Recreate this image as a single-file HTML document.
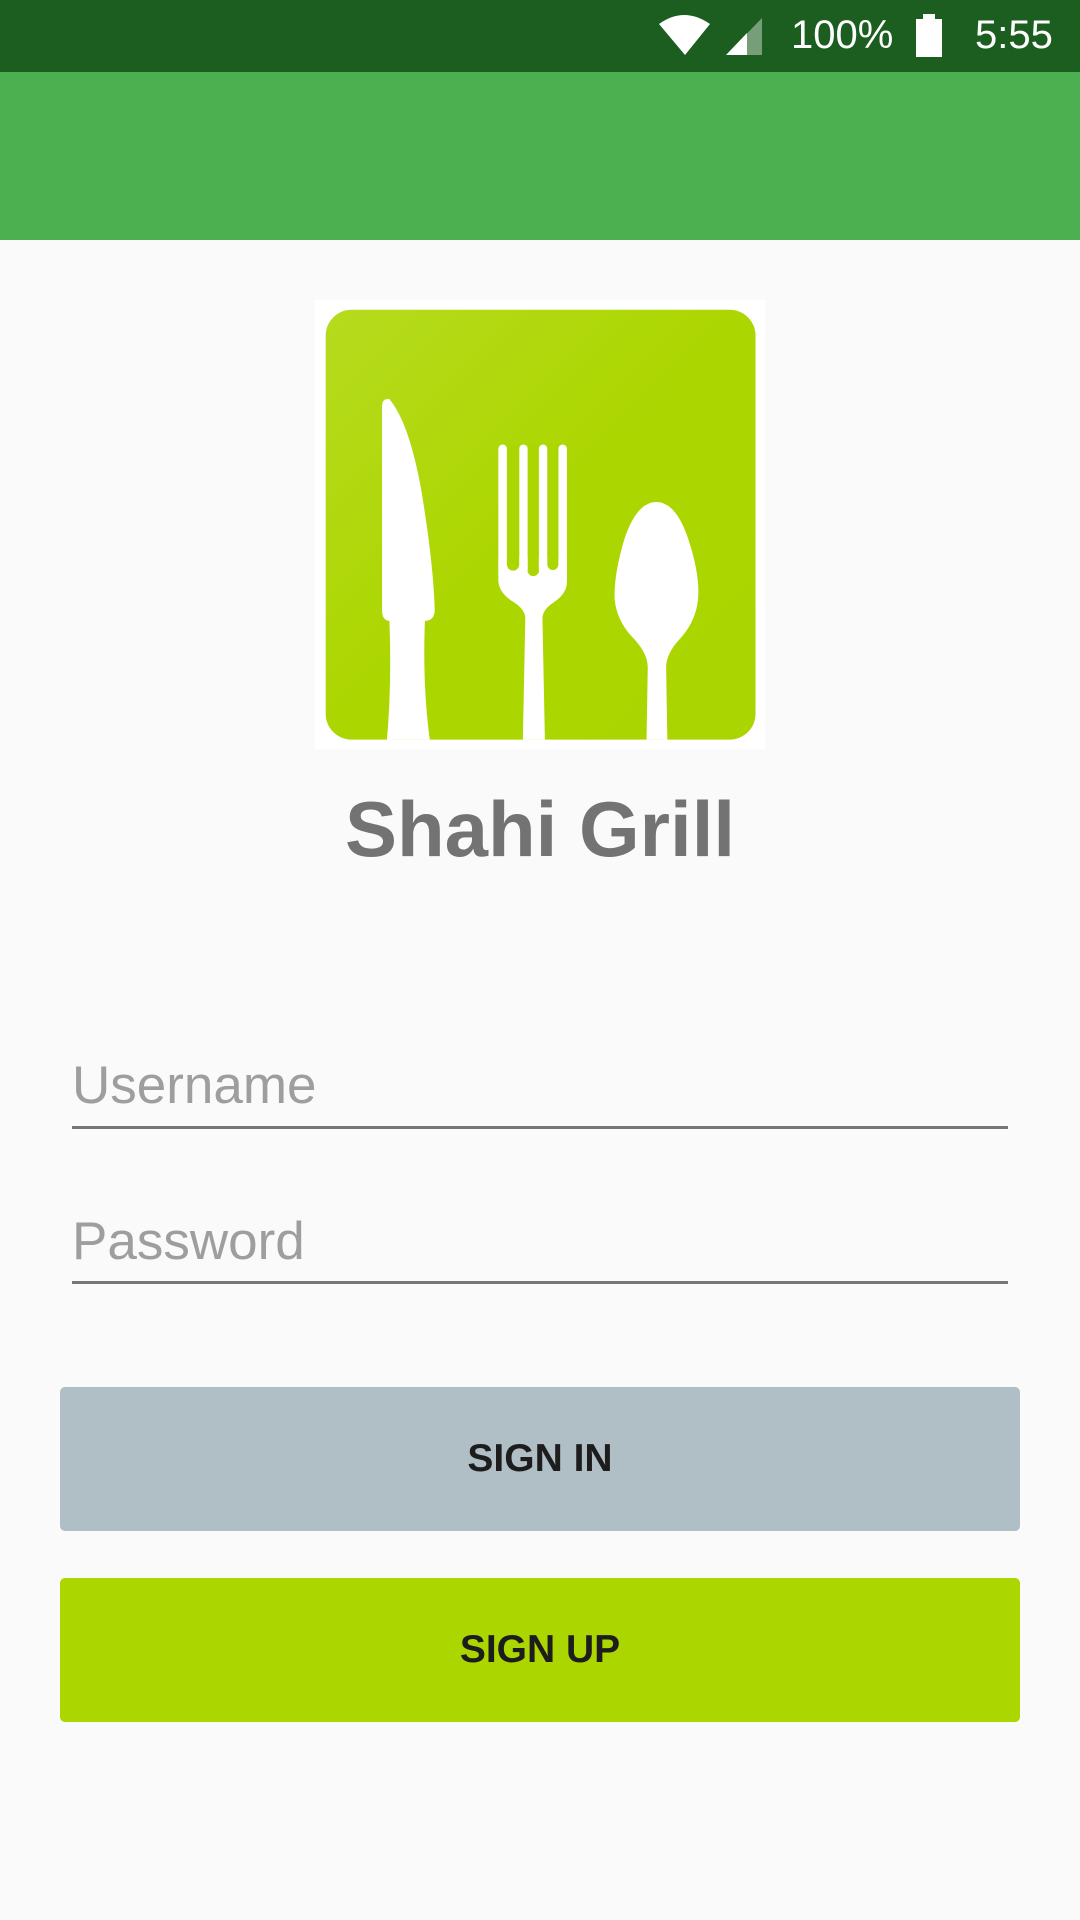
<!DOCTYPE html>
<html><head><meta charset="utf-8"><style>
body{margin:0;width:1080px;height:1920px;background:#fafafa;position:relative;overflow:hidden;font-family:"Liberation Sans",Roboto,sans-serif}
.sb{position:absolute;left:0;top:0;width:1080px;height:72px;background:#1b5e20}
.ab{position:absolute;left:0;top:72px;width:1080px;height:168px;background:#4caf50}
.t{position:absolute;color:#fff;font-size:40px;top:13px}
.title{position:absolute;left:0;width:1080px;text-align:center;top:784px;font-size:78px;font-weight:bold;color:#737373}
.hint{position:absolute;left:72px;font-size:53px;color:#9e9e9e}
.line{position:absolute;left:72px;width:936px;height:3px;background:#767676}
.btn{position:absolute;left:60px;width:960px;height:144px;border-radius:5px;text-align:center;line-height:144px;font-size:39px;font-weight:bold;color:#1d1d1d}
</style></head><body>
<div class="sb"></div>
<svg style="position:absolute;left:0;top:0" width="1080" height="72">
<path d="M659 24 Q684 6 710 24 L685 55 Z" fill="#fff"/>
<path d="M726 55 L762 18 L762 55 Z" fill="#fff" opacity="0.4"/>
<path d="M726 55 L747 33 L747 55 Z" fill="#fff"/>
<rect x="916" y="19" width="26" height="38" fill="#fff"/><rect x="923" y="14" width="12" height="6" fill="#fff"/>
</svg>
<div class="t" style="left:791px">100%</div>
<div class="t" style="left:975px">5:55</div>
<div class="ab"></div>
<svg style="position:absolute;left:0;top:0" width="1080" height="1920" viewBox="0 0 882 1568">
<defs><linearGradient id="g" x1="0" y1="0" x2="1" y2="1"><stop offset="0" stop-color="#b6db1e"/><stop offset="0.5" stop-color="#acd600"/><stop offset="1" stop-color="#aad500"/></linearGradient></defs>
<rect x="257" y="245" width="368" height="367" fill="#fff"/>
<rect x="266" y="253" width="351" height="351" rx="21" fill="url(#g)"/>
<path d="M312 332 Q312 325 318 326 Q334 345 344 400 Q354 460 355 498 Q355 507 347 507 Q345 560 351 604 L316 604 Q320 560 318 507 Q312 507 312 498 Z" fill="#fff"/>
<g fill="#fff">
<rect x="407" y="363" width="7" height="110" rx="3.5"/>
<rect x="424" y="363" width="7" height="108" rx="3.5"/>
<rect x="440" y="363" width="7" height="108" rx="3.5"/>
<rect x="456" y="363" width="7" height="110" rx="3.5"/>
<rect x="430" y="455" width="11" height="12"/>
<path d="M407 455 L463 455 L463 475 Q463 485 452 492 Q443 498 443 505 L445 604 L427 604 L429 505 Q429 498 420 492 Q408 485 407 475 Z"/>
</g>
<rect x="414" y="363" width="10" height="98" fill="#acd600"/>
<rect x="431" y="363" width="9" height="105" fill="#acd600"/>
<rect x="447" y="363" width="9" height="98" fill="#acd600"/>
<circle cx="419" cy="461" r="5" fill="#acd600"/><circle cx="435.5" cy="466" r="4.5" fill="#acd600"/><circle cx="451.5" cy="461" r="4.5" fill="#acd600"/>
<path d="M536 410 Q552 410 562 440 Q572 470 570 490 Q568 508 555 522 Q544 534 544 545 L545 604 L528 604 L529 545 Q529 534 518 522 Q504 508 502 490 Q501 470 510 440 Q520 410 536 410 Z" fill="#fff"/>
</svg>
<div class="title">Shahi Grill</div>
<div class="hint" style="top:1055px">Username</div>
<div class="line" style="top:1126px"></div>
<div class="hint" style="top:1211px">Password</div>
<div class="line" style="top:1281px"></div>
<div class="btn" style="top:1387px;background:#b0bec5">SIGN IN</div>
<div class="btn" style="top:1578px;background:#acd600">SIGN UP</div>
</body></html>
